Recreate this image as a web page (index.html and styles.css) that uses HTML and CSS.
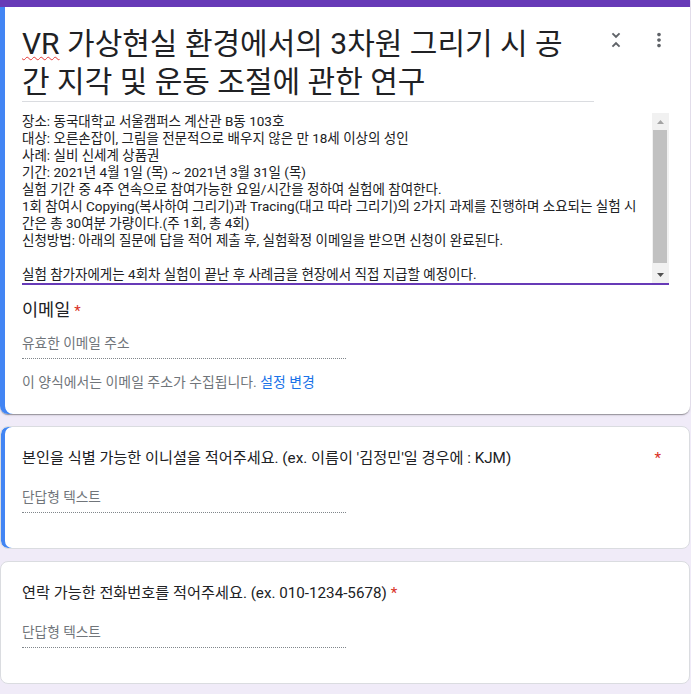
FILE: index.html
```html
<!DOCTYPE html>
<html lang="ko">
<head>
<meta charset="utf-8">
<title>VR 가상현실 환경에서의 3차원 그리기 시 공간 지각 및 운동 조절에 관한 연구</title>
<link rel="stylesheet" href="styles.css">
</head>
<body>
<main class="form">
  <section class="card card-header is-focused">
    <div class="header-row">
      <h1 class="form-title"><span class="spell">VR</span> 가상현실 환경에서의 3차원 그리기 시 공간 지각 및 운동 조절에 관한 연구</h1>
      <div class="header-icons">
        <svg class="icon" viewBox="0 0 24 24" aria-hidden="true"><path d="M7.41 18.59L8.83 20 12 16.83 15.17 20l1.41-1.41L12 14l-4.59 4.59zm9.18-13.18L15.17 4 12 7.17 8.83 4 7.41 5.41 12 10l4.59-4.59z"/></svg>
        <svg class="icon" viewBox="0 0 24 24" aria-hidden="true"><path d="M12 8c1.1 0 2-.9 2-2s-.9-2-2-2-2 .9-2 2 .9 2 2 2zm0 2c-1.1 0-2 .9-2 2s.9 2 2 2 2-.9 2-2-.9-2-2-2zm0 6c-1.1 0-2 .9-2 2s.9 2 2 2 2-.9 2-2-.9-2-2-2z"/></svg>
      </div>
    </div>
    <div class="desc">
      <div class="desc-text">장소: 동국대학교 서울캠퍼스 계산관 B동 103호<br>대상: 오른손잡이, 그림을 전문적으로 배우지 않은 만 18세 이상의 성인<br>사례: 실비 신세계 상품권<br>기간: 2021년 4월 1일 (목) ~ 2021년 3월 31일 (목)<br>실험 기간 중 4주 연속으로 참여가능한 요일/시간을 정하여 실험에 참여한다.<br>1회 참여시 Copying(복사하여 그리기)과 Tracing(대고 따라 그리기)의 2가지 과제를 진행하며 소요되는 실험 시간은 총 30여분 가량이다.(주 1회, 총 4회)<br>신청방법: 아래의 질문에 답을 적어 제출 후, 실험확정 이메일을 받으면 신청이 완료된다.<br><br>실험 참가자에게는 4회차 실험이 끝난 후 사례금을 현장에서 직접 지급할 예정이다.</div>
      <div class="scrollbar">
        <div class="sb-btn"><svg viewBox="0 0 7 4"><polygon class="sb-arrow-off" points="0,4 3.5,0 7,4"/></svg></div>
        <div class="sb-thumb"></div>
        <div class="sb-btn"><svg viewBox="0 0 7 4"><polygon class="sb-arrow" points="0,0 7,0 3.5,4"/></svg></div>
      </div>
    </div>
    <div class="email">
      <div class="q-title">이메일<span class="req">*</span></div>
      <div class="answer">유효한 이메일 주소</div>
      <div class="note">이 양식에서는 이메일 주소가 수집됩니다. <a class="link" href="#">설정 변경</a></div>
    </div>
  </section>

  <section class="card card-question is-hover">
    <div class="q-title q-spread"><span>본인을 식별 가능한 이니셜을 적어주세요. (ex. 이름이 '김정민'일 경우에 : KJM)</span><span class="req">*</span></div>
    <div class="answer answer-q">단답형 텍스트</div>
  </section>

  <section class="card card-question">
    <div class="q-title">연락 가능한 전화번호를 적어주세요. (ex. 010-1234-5678)<span class="req">*</span></div>
    <div class="answer answer-q">단답형 텍스트</div>
  </section>
</main>
</body>
</html>
```
FILE: styles.css
```css
html, body {
  margin: 0;
  padding: 0;
}
body {
  background: #f0ebf8;
  font-family: Roboto, "Noto Sans CJK KR", sans-serif;
  color: #202124;
}
.form {
  width: 690px;
  display: flex;
  flex-direction: column;
  gap: 12px;
}
.card {
  background: #fff;
  border-radius: 8px;
  box-sizing: border-box;
  width: 690px;
}
.card-header {
  border-top: 7px solid #673ab7;
  border-radius: 0 0 8px 8px;
  padding: 18px 0 22px 22px;
  box-shadow: inset 5px 0 0 #4285f4, 0 2px 1px -1px rgba(0,0,0,.2), 0 1px 1px 0 rgba(0,0,0,.14), 0 1px 3px 0 rgba(0,0,0,.12);
}
.header-row {
  display: flex;
  align-items: flex-start;
}
.form-title {
  margin: 0;
  width: 572px;
  box-sizing: border-box;
  padding-right: 18px;
  font-size: 30px;
  line-height: 38px;
  font-weight: 400;
  border-bottom: 1px solid #dadce0;
  color: #202124;
}
.spell {
  text-decoration: underline wavy #e53935;
  text-decoration-thickness: 1px;
  text-underline-offset: 2px;
}
.header-icons {
  display: flex;
  gap: 21px;
  margin: 4px 0 0 11px;
}
.icon {
  width: 22px;
  height: 22px;
  fill: #5f6368;
}
.desc {
  display: flex;
  justify-content: space-between;
  width: 647px;
  height: 170px;
  margin-top: 11px;
  border-bottom: 2px solid #673ab7;
}
.desc-text {
  width: 622px;
  font-size: 13.5px;
  line-height: 17px;
  overflow: hidden;
  color: #202124;
}
.scrollbar {
  width: 17px;
  background: #f1f1f1;
  display: flex;
  flex-direction: column;
}
.sb-btn {
  height: 17px;
  display: flex;
  align-items: center;
  justify-content: center;
}
.sb-btn svg {
  width: 7px;
  height: 4px;
}
.sb-arrow-off { fill: #a3a3a3; }
.sb-arrow { fill: #505050; }
.sb-thumb {
  flex: 1;
  margin: 0 2px 3px 1px;
  background: #c1c1c1;
}
.email {
  margin-top: 15px;
}
.q-title {
  font-size: 15.2px;
  line-height: 20px;
  color: #202124;
}
.email .q-title {
  font-size: 17.5px;
}
.q-spread {
  display: flex;
  justify-content: space-between;
}
.req {
  color: #d93025;
  padding-left: 4px;
}
.email .req {
  font-size: 15px;
}
.answer {
  width: 324px;
  margin-top: 12px;
  padding-bottom: 5px;
  font-size: 13.7px;
  line-height: 20px;
  color: #70757a;
  border-bottom: 1px dotted #80868b;
}
.answer-q {
  margin-top: 19px;
}
.note {
  margin-top: 13px;
  font-size: 13.9px;
  line-height: 20px;
  color: #70757a;
}
.link {
  color: #1a73e8;
  text-decoration: none;
}
.card-question {
  border: 1px solid #dadce0;
  padding: 21px 28px 35px 21px;
}
.card-question.is-hover {
  box-shadow: inset 4px 0 0 #4285f4;
}
```
